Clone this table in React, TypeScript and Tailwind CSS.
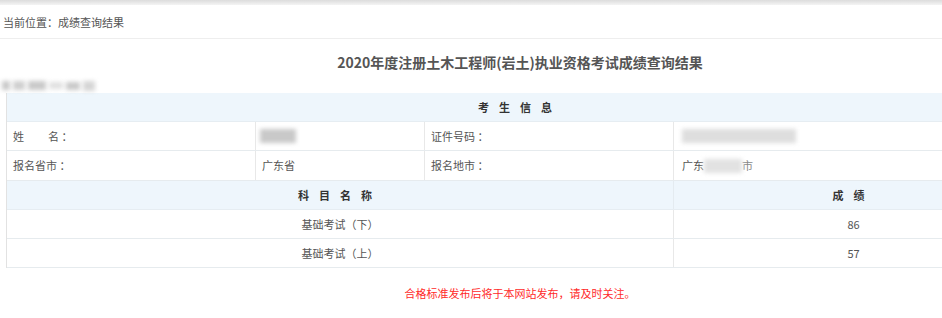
const font = "font-['Microsoft_YaHei','Noto_Sans_CJK_SC',sans-serif]";

function Blur({ w, h = 12, className = "" }: { w: number; h?: number; className?: string }) {
  return (
    <span
      className={`inline-block bg-[#c9c9c9] blur-[2px] align-middle ${className}`}
      style={{ width: w, height: h }}
    />
  );
}

export default function App() {
  return (
    <div className={`w-[1040px] bg-white text-[11px] text-[#555] ${font}`}>
      <div className="h-[5px] bg-gradient-to-b from-[#dcdcdc] to-[#f4f4f4]" />
      <div className="flex h-[34px] items-center border-b border-[#eeeeee] px-[3px] pt-[2px] text-[#555]">
        当前位置：成绩查询结果
      </div>

      <h1 className="pt-[13px] pb-[6px] text-center text-[14px] font-bold leading-[20px] text-[#555]">
        2020年度注册土木工程师(岩土)执业资格考试成绩查询结果
      </h1>

      <div className="flex h-[15px] items-center gap-[3px] pl-[2px]">
        <Blur w={8} h={9} className="bg-[#bdbdbd]" />
        <Blur w={12} h={9} className="bg-[#cfcfcf]" />
        <Blur w={18} h={9} className="bg-[#c4c4c4]" />
        <Blur w={14} h={7} className="bg-[#e0e0e0]" />
        <Blur w={14} h={8} className="bg-[#b8b8b8]" />
        <Blur w={12} h={10} className="bg-[#d6d6d6]" />
      </div>

      <div className="ml-[6px] w-[1027px] border-l border-[#e2e2e2]">
        <div className="flex h-[29px] items-center justify-center border-b border-[#e6edf2] bg-[#eef6fc] font-bold tracking-[10px] text-[#333]">
          考生信息
        </div>

        <div className="flex h-[29px] border-b border-[#e6ebee]">
          <div className="flex w-[249px] items-center border-r border-[#e8e8e8] px-[6px]">
            <span>姓</span>
            <span className="ml-[24px]">名 ：</span>
          </div>
          <div className="flex w-[169px] items-center border-r border-[#e8e8e8] px-[4px]">
            <Blur w={36} h={14} />
          </div>
          <div className="flex w-[249px] items-center border-r border-[#e8e8e8] px-[6px]">证件号码 ：</div>
          <div className="flex flex-1 items-center px-[8px]">
            <Blur w={114} h={14} className="bg-[#dedede]" />
          </div>
        </div>

        <div className="flex h-[30px] border-b border-[#e6ebee]">
          <div className="flex w-[249px] items-center border-r border-[#e8e8e8] px-[6px]">报名省市 ：</div>
          <div className="flex w-[169px] items-center border-r border-[#e8e8e8] px-[6px]">广东省</div>
          <div className="flex w-[249px] items-center border-r border-[#e8e8e8] px-[6px]">报名地市 ：</div>
          <div className="flex flex-1 items-center px-[8px]">
            广东
            <Blur w={38} h={14} className="bg-[#e2e2e2]" />
            <span className="text-[#888]">市</span>
          </div>
        </div>

        <div className="flex h-[29px] border-b border-[#e6edf2] bg-[#eef6fc] font-bold text-[#333]">
          <div className="flex w-[667px] items-center justify-center border-r border-[#e4ebf0] tracking-[10px]">
            科目名称
          </div>
          <div className="flex flex-1 items-center justify-center tracking-[10px]">成绩</div>
        </div>

        <div className="flex h-[29px] border-b border-[#e6ebee]">
          <div className="flex w-[667px] items-center justify-center border-r border-[#e8e8e8]">
            基础考试（下）
          </div>
          <div className="flex flex-1 items-center justify-center">86</div>
        </div>

        <div className="flex h-[29px] border-b border-[#e6ebee]">
          <div className="flex w-[667px] items-center justify-center border-r border-[#e8e8e8]">
            基础考试（上）
          </div>
          <div className="flex flex-1 items-center justify-center">57</div>
        </div>
      </div>

      <p className="pt-[17px] text-center text-[11px] text-[#ff2a2a]">
        合格标准发布后将于本网站发布，请及时关注。
      </p>
      <div className="h-[20px]" />
    </div>
  );
}
